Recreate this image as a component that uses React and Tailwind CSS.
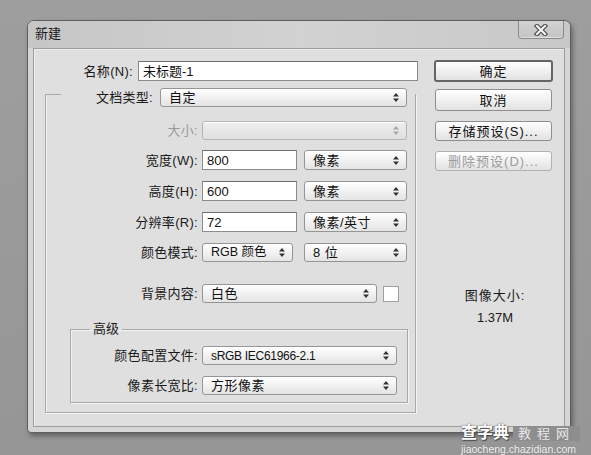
import React from "react";

const FONT = "font-['Liberation_Sans','Noto_Sans_CJK_SC',sans-serif]";

function Arrows({ disabled }) {
  return (
    <svg width="6" height="9" viewBox="0 0 6 9" className="shrink-0">
      <path d="M3 0L6 3.5H0Z M3 9L0 5.5H6Z" fill={disabled ? "#a8a8a8" : "#333"} />
    </svg>
  );
}

function Select({ className = "", textClass = "text-[13px] tracking-[0.5px]", value, disabled }) {
  return (
    <div
      className={`${className} flex items-center justify-between pl-[8px] pr-[7px] rounded-[3px] border ${
        disabled
          ? "border-[#b4b4b4] bg-gradient-to-b from-[#eeeeee] to-[#e0e0e0]"
          : "border-[#959595] bg-gradient-to-b from-[#ffffff] to-[#e4e4e4]"
      } leading-none text-[#111] shadow-[inset_0_1px_0_#ffffff]`}
    >
      <span className={`${textClass} whitespace-nowrap`}>{value}</span>
      <Arrows disabled={disabled} />
    </div>
  );
}

function Input({ className = "", value }) {
  return (
    <div
      className={`${className} flex items-center pl-[4px] bg-white border border-[#8c8c8c] border-t-[#6e6e6e] text-[13px] leading-none text-[#111]`}
    >
      {value}
    </div>
  );
}

function Label({ className = "", children, disabled }) {
  return (
    <div
      className={`${className} shrink-0 text-right text-[13px] leading-none whitespace-nowrap tracking-[0.3px] ${
        disabled ? "text-[#9a9a9a]" : "text-[#1a1a1a]"
      }`}
    >
      {children}
    </div>
  );
}

function Button({ className = "", children, disabled, primary }) {
  return (
    <div
      className={`${className} flex items-center justify-center rounded-[3px] text-[13px] leading-none tracking-[1px] ${
        primary
          ? "border-2 border-[#646464]"
          : disabled
          ? "border border-[#b0b0b0]"
          : "border border-[#8e8e8e]"
      } ${disabled ? "text-[#9c9c9c]" : "text-[#111]"} bg-gradient-to-b from-[#ffffff] to-[#e2e2e2] shadow-[inset_0_1px_0_#ffffff]`}
    >
      {children}
    </div>
  );
}

export default function App() {
  return (
    <div className={`${FONT} relative w-[591px] h-[455px] overflow-hidden bg-gradient-to-b from-[#9e9e9e] to-[#969696] pt-[20px] pl-[27px]`}>
      {/* window */}
      <div className="w-[544px] h-[413px] flex flex-col rounded-t-[7px] rounded-b-[4px] border border-[#5e5e5e] bg-[#d6d6d6] shadow-[2px_3px_5px_rgba(0,0,0,0.35)]">
        {/* title bar */}
        <div className="h-[27px] shrink-0 flex items-start justify-between pl-[7px] pr-[6px] rounded-t-[6px] bg-gradient-to-r from-[#c6c6c6] via-[#d2d2d2] to-[#c8c8c8]">
          <span className="mt-[6px] text-[13px] leading-none text-[#1a1a1a]">新建</span>
          <div className="w-[46px] h-[18px] flex items-center justify-center border border-t-0 border-[#8a8a8a] rounded-b-[4px] bg-gradient-to-b from-[#d2d2d2] to-[#c4c4c4] shadow-[inset_0_-1px_0_#e0e0e0]">
            <svg width="16" height="12" viewBox="0 0 16 12">
              <path d="M4 2L12 10M12 2L4 10" stroke="#4a4a4a" strokeWidth="4.4" strokeLinecap="square" />
              <path d="M4 2L12 10M12 2L4 10" stroke="#f4f4f4" strokeWidth="2.2" strokeLinecap="square" />
            </svg>
          </div>
        </div>

        {/* body */}
        <div className="flex-1 mx-[5px] mb-[5px] flex border border-[#9c9c9c] bg-[#dfdfdf] shadow-[inset_1px_1px_0_#f0f0f0]">
          {/* left column */}
          <div className="w-[384px] shrink-0 flex flex-col">
            <div className="mt-[12px] flex items-center gap-[5px]">
              <Label className="w-[99px]">名称(N):</Label>
              <Input className="w-[280px] h-[20px]" value="未标题-1" />
            </div>

            {/* main group */}
            <div className="mt-[13px] ml-[11px] w-[371px] h-[319px] flex flex-col border-l border-r border-b border-[#a8a8a8] shadow-[inset_1px_0_0_#f2f2f2,1px_1px_0_#f4f4f4]">
              <div className="w-[15px] h-px border-t border-[#a8a8a8]" />
              <div className="-mt-[7px] flex items-center gap-[7px]">
                <Label className="w-[107px]">文档类型:</Label>
                <Select className="w-[247px] h-[19px]" value="自定" />
              </div>

              <div className="mt-[14px] flex items-center gap-[4px]">
                <Label className="w-[152px]" disabled>
                  大小:
                </Label>
                <Select className="w-[205px] h-[19px]" value="" disabled />
              </div>

              <div className="mt-[10px] flex items-center">
                <Label className="w-[152px]">宽度(W):</Label>
                <Input className="ml-[4px] w-[95px] h-[20px]" value="800" />
                <Select className="ml-[7px] w-[103px] h-[20px]" value="像素" />
              </div>

              <div className="mt-[11px] flex items-center">
                <Label className="w-[152px]">高度(H):</Label>
                <Input className="ml-[4px] w-[95px] h-[20px]" value="600" />
                <Select className="ml-[7px] w-[103px] h-[20px]" value="像素" />
              </div>

              <div className="mt-[11px] flex items-center">
                <Label className="w-[152px]">分辨率(R):</Label>
                <Input className="ml-[4px] w-[95px] h-[20px]" value="72" />
                <Select className="ml-[7px] w-[103px] h-[20px]" value="像素/英寸" />
              </div>

              <div className="mt-[11px] flex items-center">
                <Label className="w-[152px]">颜色模式:</Label>
                <Select className="ml-[4px] w-[91px] h-[19px]" textClass="text-[12.5px] tracking-[0px]" value="RGB 颜色" />
                <Select className="ml-[11px] w-[103px] h-[19px]" value="8 位" />
              </div>

              <div className="mt-[22px] flex items-center">
                <Label className="w-[152px]">背景内容:</Label>
                <Select className="ml-[4px] w-[175px] h-[19px]" value="白色" />
                <div className="ml-[6px] w-[16px] h-[16px] bg-white border border-[#a0a0a0]" />
              </div>

              {/* advanced */}
              <fieldset className="mt-[18px] ml-[24px] w-[338px] pb-[7px] border border-[#a8a8a8] shadow-[inset_1px_1px_0_#f2f2f2,1px_1px_0_#f4f4f4]">
                <legend className="ml-[19px] px-[3px] text-[13px] leading-[16px] text-[#1a1a1a]">高级</legend>
                <div className="mt-[9px] flex items-center">
                  <Label className="w-[127px]">颜色配置文件:</Label>
                  <Select className="ml-[4px] w-[195px] h-[19px]" textClass="text-[12px] tracking-[-0.3px]" value="sRGB IEC61966-2.1" />
                </div>
                <div className="mt-[11px] flex items-center">
                  <Label className="w-[127px]">像素长宽比:</Label>
                  <Select className="ml-[4px] w-[195px] h-[19px]" value="方形像素" />
                </div>
              </fieldset>
            </div>
          </div>

          {/* right column */}
          <div className="ml-[16px] mt-[11px] w-[119px] flex flex-col">
            <Button className="w-[119px] h-[22px]" primary>
              确定
            </Button>
            <Button className="mt-[7px] ml-[1px] w-[117px] h-[22px]">取消</Button>
            <Button className="mt-[10px] ml-[1px] w-[117px] h-[20px]">存储预设(S)...</Button>
            <Button className="mt-[10px] ml-[1px] w-[117px] h-[20px]" disabled>
              删除预设(D)...
            </Button>
            <div className="mt-[117px] text-center text-[13px] leading-[16px] text-[#1a1a1a] tracking-[1px] pl-[3px]">图像大小:</div>
            <div className="mt-[6px] text-center text-[13px] leading-[16px] text-[#1a1a1a] pl-[3px]">1.37M</div>
          </div>
        </div>
      </div>

      {/* watermark overlay */}
      <div className="absolute left-[461px] top-[424px] flex flex-col">
        <div className="flex items-center">
          <span className="text-[16px] leading-[18px] font-bold text-white tracking-[0px] [text-shadow:0_0_2px_#555,1px_1px_1px_#444]">查字典</span>
          <span className="ml-[4px] px-[5px] h-[15px] flex items-center bg-[#8e8e8e] text-[13px] leading-none text-[#e8e8e8] tracking-[6px]">教程网</span>
        </div>
        <span className="mt-[2px] text-[10.5px] leading-[10px] text-[#f4f4f4] font-['Liberation_Sans',sans-serif] [text-shadow:0_0_1px_#777]">
          jiaocheng.chazidian.com
        </span>
      </div>
    </div>
  );
}
